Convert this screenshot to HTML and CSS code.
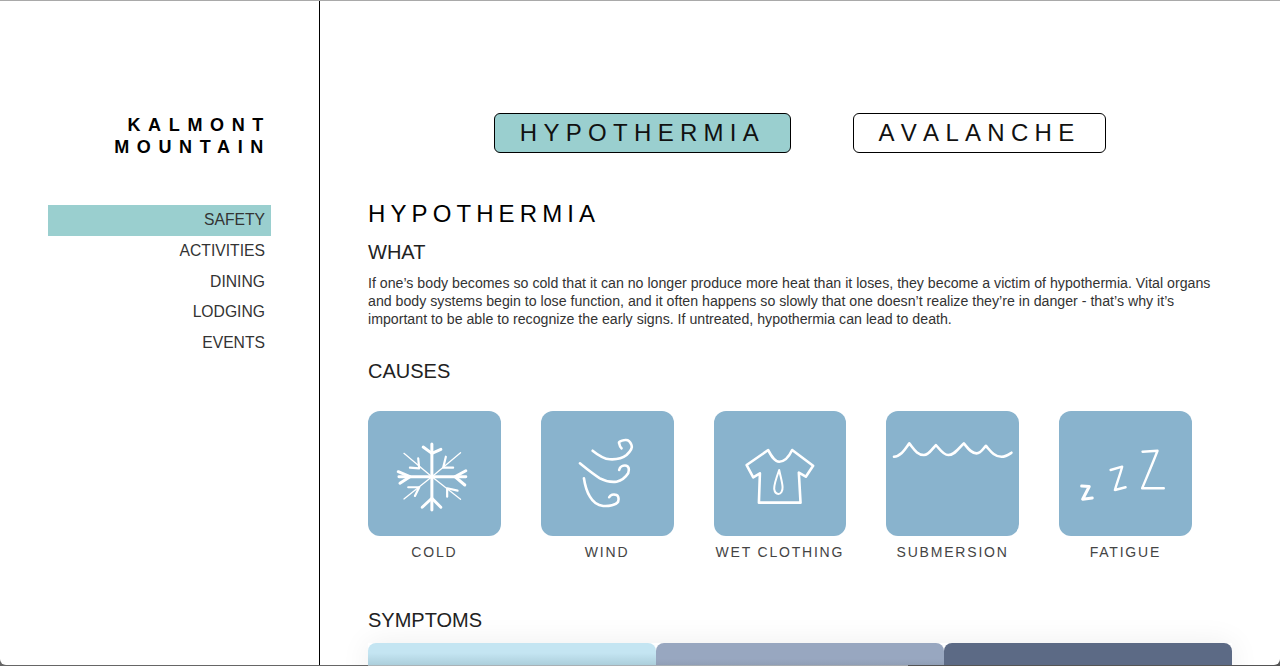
FILE: index.html
```html
<!DOCTYPE html>
<html lang="en">
<head>
    <meta charset="UTF-8">
    <title>Kalmont Mountain - Safety</title>
    <link rel="stylesheet" href="styles.css">
</head>
<body>
    <div class="page">
        <!-- sidebar -->
        <aside class="sidebar">
            <h1 class="logo">KALMONT<br>MOUNTAIN</h1>
            <nav class="nav">
                <a class="navItem active" href="#">SAFETY</a>
                <a class="navItem" href="#">ACTIVITIES</a>
                <a class="navItem" href="#">DINING</a>
                <a class="navItem" href="#">LODGING</a>
                <a class="navItem" href="#">EVENTS</a>
            </nav>
        </aside>

        <!-- main content -->
        <main class="content">
            <div class="tabs">
                <button class="tab tabHypo active">HYPOTHERMIA</button>
                <button class="tab tabAva">AVALANCHE</button>
            </div>

            <h2 class="pageTitle">HYPOTHERMIA</h2>
            <h3 class="sectionTitle">WHAT</h3>
            <p class="text">If one’s body becomes so cold that it can no longer produce more heat than it loses, they become a victim of hypothermia. Vital organs and body systems begin to lose function, and it often happens so slowly that one doesn’t realize they’re in danger - that’s why it’s important to be able to recognize the early signs. If untreated, hypothermia can lead to death.</p>

            <h3 class="sectionTitle causesTitle">CAUSES</h3>
            <div class="causes">
                <div class="cause">
                    <div class="causeIcon">
                        <svg viewBox="0 0 133 125" fill="none" stroke="#fff" stroke-linecap="round" stroke-linejoin="round">
                            <path d="M64 33V99M31 65.7H98" stroke-width="3"/>
                            <path d="M36 42.3L64 65.7L92.7 88.3M92.7 41.7L64 65.7L36 88" stroke-width="1.3"/>
                            <path d="M55.3 36L64 42.3L73 38.3M54.3 96.3L64 87.3L73 96.3M30.3 60.7L42 65.7L32 72.3M98 59.7L87 65.7L97 74" stroke-width="3"/>
                            <path d="M50.3 47.3L51.3 57.3L42 56.7M78 45.7L75.3 56.7L85.3 56.7M40.3 76.3L51.3 76.3L47 85M79.3 85.7L79.3 77.3L89.7 79.7" stroke-width="2.2"/>
                        </svg>
                    </div>
                    <span class="causeLabel">COLD</span>
                </div>
                <div class="cause">
                    <div class="causeIcon">
                        <svg viewBox="0 0 133 125" fill="none" stroke="#fff" stroke-linecap="round" stroke-linejoin="round" stroke-width="2.6">
                            <path d="M51.7 39.7C57 44 63 48 69 48.3C76 48.7 82 47 85.7 44C90 40 92 37 90.7 34C89 29.5 86.5 28.5 84 29C80 29.7 77.5 30.5 78.3 32.3C78.8 35 79.5 36.5 80.7 37.3"/>
                            <path d="M39 52.3C46 58 52 63 59 67.3C64 70 70 71.3 75.7 70.7C81 69.5 85 66 87.3 62.3C88.5 58.5 88 55.5 85.7 54.7C82 54 79 56 78.3 59"/>
                            <path d="M43 67.3C44 74 46 81 49 85.7C52 91 57 94.5 62.3 95C68 95.5 75 94 77.3 90.7C78.5 87 77 84.5 75.7 84C72.5 82.8 69.5 84 68.3 86.3"/>
                        </svg>
                    </div>
                    <span class="causeLabel">WIND</span>
                </div>
                <div class="cause">
                    <div class="causeIcon">
                        <svg viewBox="0 0 133 125" fill="none" stroke="#fff" stroke-linecap="round" stroke-linejoin="round">
                            <path d="M54.3 39C58 46 61 50.7 65.3 50.7C70 50.7 75 46 78.3 39L99.3 54.7L92 65.7L85 61.7L86.7 91.7H45L46 62.3L39.3 66.3L32.7 54Z" stroke-width="2.6"/>
                            <path d="M65.3 59C62 68 60 74 60.3 78C60.8 81.5 63 83 64.5 83C67 83 68.9 80 68.7 76C68.4 71 66.5 65 65.3 59Z" stroke-width="2"/>
                        </svg>
                    </div>
                    <span class="causeLabel">WET CLOTHING</span>
                </div>
                <div class="cause">
                    <div class="causeIcon">
                        <svg viewBox="0 0 133 125" fill="none" stroke="#fff" stroke-linecap="round" stroke-linejoin="round">
                            <path d="M8 45.7C15 45.5 19 38 23.3 32.3C28 38 31 44 38 44C43 44 46 38 50 34C54 38 57 44 62.3 44C69 44 73 37 78 32.3C82 37 85 42.3 90.7 42.3C95 42.3 97 38 100 34.7C104 39 108 45.7 115.7 45.7C120 45.7 123 43.5 125.7 41.7" stroke-width="2.6"/>
                        </svg>
                    </div>
                    <span class="causeLabel">SUBMERSION</span>
                </div>
                <div class="cause">
                    <div class="causeIcon">
                        <svg viewBox="0 0 133 125" fill="none" stroke="#fff" stroke-linecap="round" stroke-linejoin="round">
                            <path d="M22.7 75L30.3 75.5L23.7 88.3L33.3 87" stroke-width="3"/>
                            <path d="M51.7 59L63.3 55.7C61 64 58 72 56 79L66.7 76.3" stroke-width="2.4"/>
                            <path d="M83.7 40.7L98.7 39.7C94 52 88 66 83.3 77.3L105 77.3" stroke-width="2.4"/>
                        </svg>
                    </div>
                    <span class="causeLabel">FATIGUE</span>
                </div>
            </div>

            <h3 class="sectionTitle symptomsTitle">SYMPTOMS</h3>
            <div class="symptoms">
                <div class="symptom mild"></div>
                <div class="symptom moderate"></div>
                <div class="symptom severe"></div>
            </div>
        </main>
    </div>
</body>
</html>
```

FILE: styles.css
```css
html, body {
    margin: 0;
    padding: 0;
    height: 100%;
    overflow: hidden;
}

body {
    font-family: 'Liberation Sans', Arial, sans-serif;
    color: #000;
    background: linear-gradient(90deg, #666 368px, #aab4b8 368px, #a5a9ae 908px, #555 908px);
}

.page {
    display: flex;
    height: 665px;
    box-sizing: border-box;
    border-top: 1px solid #a9a9a9;
    border-radius: 0 0 6px 6px;
    background-color: #fff;
    overflow: hidden;
}

.sidebar {
    width: 320px;
    flex: none;
    box-sizing: border-box;
    border-right: 1px solid #000;
    padding: 113px 48px 0 48px;
}

.logo {
    margin: 0;
    text-align: right;
    font-size: 18px;
    line-height: 22px;
    font-weight: bold;
    letter-spacing: 7.65px;
}

.nav {
    display: flex;
    flex-direction: column;
    margin-top: 47px;
}

.navItem {
    height: 30.75px;
    line-height: 30px;
    padding-right: 6px;
    text-align: right;
    font-size: 15.7px;
    color: #333;
    text-decoration: none;
}

.navItem.active {
    background-color: #9acfcf;
}

.content {
    flex: 1;
    box-sizing: border-box;
    padding: 112px 48px 0 48px;
    min-width: 0;
}

.tabs {
    display: flex;
    justify-content: center;
    gap: 62px;
}

.tab {
    box-sizing: border-box;
    height: 40px;
    border: 1px solid #000;
    border-radius: 6px;
    background-color: #fff;
    color: #111;
    font-family: inherit;
    font-size: 24px;
    font-kerning: none;
    letter-spacing: 6.3px;
    padding: 0;
    cursor: pointer;
}

.tabHypo {
    width: 297px;
}

.tabAva {
    width: 253px;
}

.tab.active {
    background-color: #9acfcf;
}

.pageTitle {
    margin: 47px 0 0;
    font-size: 24px;
    line-height: 28px;
    font-weight: normal;
    letter-spacing: 5.1px;
}

.sectionTitle {
    margin: 12px 0 0;
    font-size: 20px;
    line-height: 24px;
    font-weight: normal;
    color: #222;
}

.text {
    margin: 10px 0 0;
    font-size: 14.18px;
    line-height: 18px;
    color: #333;
}

.causesTitle {
    margin-top: 31px;
}

.causes {
    display: flex;
    gap: 40px;
    margin-top: 28px;
}

.cause {
    width: 132.75px;
    text-align: center;
}

.causeIcon {
    height: 125px;
    border-radius: 12px;
    background-color: #89b3cd;
}

.causeIcon svg {
    display: block;
    width: 100%;
    height: 100%;
}

.causeLabel {
    display: block;
    margin-top: 7px;
    font-size: 14px;
    line-height: 18px;
    letter-spacing: 1.8px;
    color: #444;
    white-space: nowrap;
}

.symptomsTitle {
    margin-top: 47px;
}

.symptoms {
    display: flex;
    margin-top: 11px;
    height: 40px;
    box-shadow: 0 0 30px rgba(0, 0, 0, 0.07);
}

.symptom {
    flex: 1;
    border-radius: 8px 8px 0 0;
}

.mild {
    background: linear-gradient(#c4e5f2 25%, #a8cbd8 60%);
}

.moderate {
    background: linear-gradient(#98a7c0 40%, #8e9cb4 60%);
}

.severe {
    background-color: #5c6a85;
}
```
